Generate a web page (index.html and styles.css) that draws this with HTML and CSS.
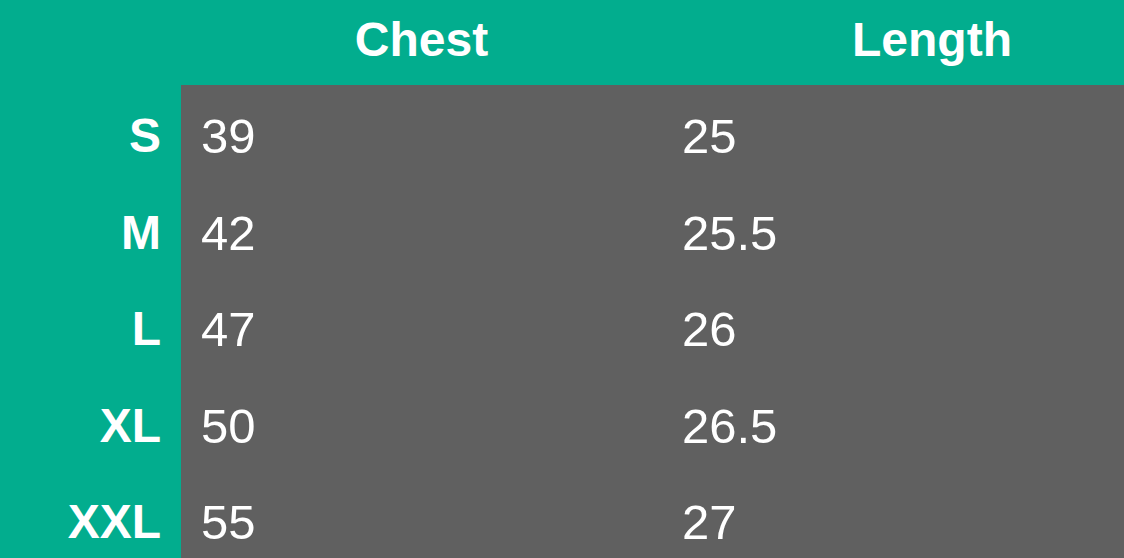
FILE: index.html
```html
<!DOCTYPE html>
<html lang="en">
<head>
<meta charset="utf-8">
<title>Size chart</title>
<link rel="stylesheet" href="styles.css">
</head>
<body>
<div class="chart">
  <div class="corner"></div>
  <div class="head">Chest</div>
  <div class="head head-last">Length</div>

  <div class="size">S</div>
  <div class="val">39</div>
  <div class="val">25</div>

  <div class="size">M</div>
  <div class="val">42</div>
  <div class="val">25.5</div>

  <div class="size">L</div>
  <div class="val">47</div>
  <div class="val">26</div>

  <div class="size">XL</div>
  <div class="val">50</div>
  <div class="val">26.5</div>

  <div class="size">XXL</div>
  <div class="val">55</div>
  <div class="val">27</div>
</div>
</body>
</html>
```
FILE: styles.css
```css
html, body {
  margin: 0;
  padding: 0;
  width: 1124px;
  height: 558px;
  overflow: hidden;
  background: #02ad8e;
}
.chart {
  display: grid;
  grid-template-columns: 181px 481px 1fr;
  grid-template-rows: 85px repeat(5, 96.5px);
  width: 1124px;
  font-family: "Liberation Sans", Arial, Helvetica, sans-serif;
  color: #fff;
  font-size: 48px;
}
.head {
  font-weight: bold;
  text-align: center;
  line-height: 79px;
  padding-bottom: 6px;
}
.head-last {
  padding-left: 78px;
}
.size {
  font-weight: bold;
  text-align: right;
  padding-right: 20px;
  line-height: 96.5px;
  padding-top: 3px;
  box-sizing: border-box;
}
.val {
  background: #606060;
  padding-left: 20px;
  line-height: 96.5px;
  padding-top: 3px;
  box-sizing: border-box;
  font-size: 49px;
}
```
